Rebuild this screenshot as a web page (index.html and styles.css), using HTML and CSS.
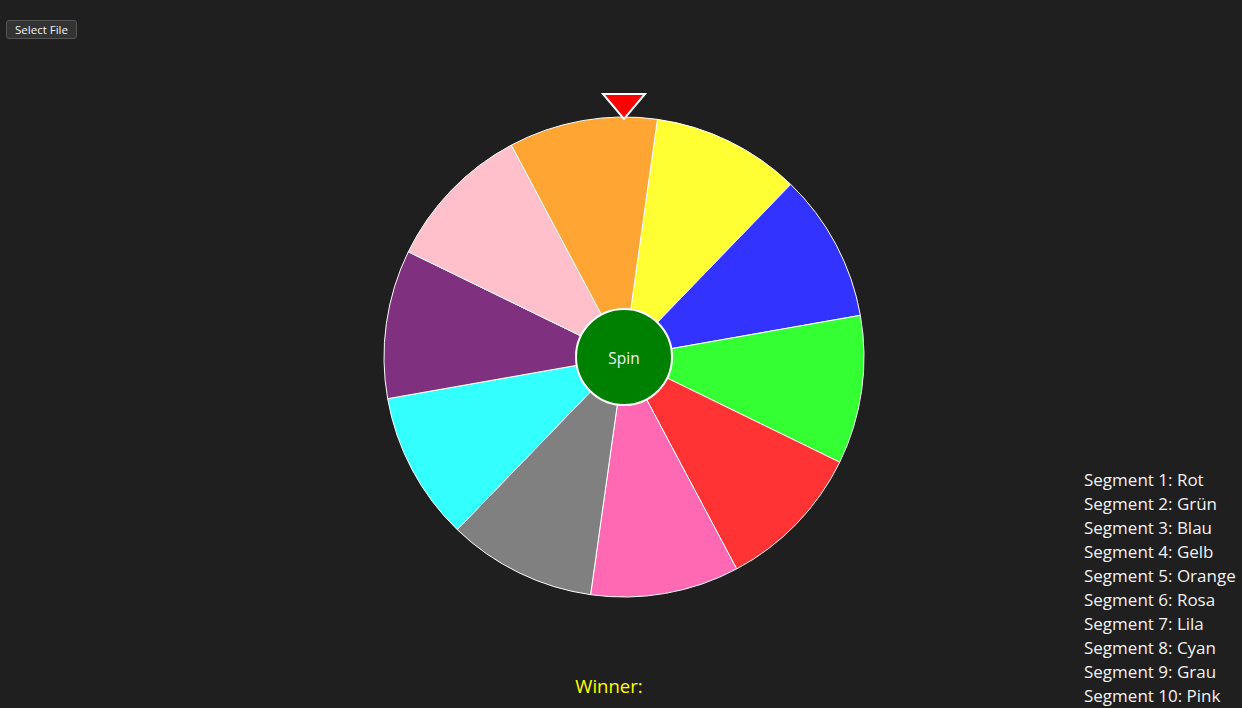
FILE: index.html
```html
<!DOCTYPE html>
<html lang="de">
<head>
<meta charset="utf-8">
<title>Glücksrad</title>
<link rel="stylesheet" href="styles.css">
</head>
<body>
<div class="toolbar">
  <button class="file-btn" type="button">Select File</button>
</div>
<main class="stage">
  <div class="wheel-col">
    <svg class="wheel" width="520" height="520" viewBox="-263 -270 520 520" xmlns="http://www.w3.org/2000/svg">
      <g class="segments" stroke="#ffffff" stroke-width="1">
        <path fill="#ffff33" d="M0 0 L33.40 -237.67 A240 240 0 0 1 166.72 -172.64 Z"/>
        <path fill="#3333ff" d="M0 0 L166.72 -172.64 A240 240 0 0 1 236.35 -41.68 Z"/>
        <path fill="#33ff33" d="M0 0 L236.35 -41.68 A240 240 0 0 1 215.71 105.21 Z"/>
        <path fill="#ff3333" d="M0 0 L215.71 105.21 A240 240 0 0 1 112.67 211.91 Z"/>
        <path fill="#ff69b4" d="M0 0 L112.67 211.91 A240 240 0 0 1 -33.40 237.67 Z"/>
        <path fill="#808080" d="M0 0 L-33.40 237.67 A240 240 0 0 1 -166.72 172.64 Z"/>
        <path fill="#33ffff" d="M0 0 L-166.72 172.64 A240 240 0 0 1 -236.35 41.68 Z"/>
        <path fill="#7f317f" d="M0 0 L-236.35 41.68 A240 240 0 0 1 -215.71 -105.21 Z"/>
        <path fill="#ffc0cb" d="M0 0 L-215.71 -105.21 A240 240 0 0 1 -112.67 -211.91 Z"/>
        <path fill="#ffa533" d="M0 0 L-112.67 -211.91 A240 240 0 0 1 33.40 -237.67 Z"/>
      </g>
      <circle class="hub" cx="0" cy="0" r="48" fill="#008000" stroke="#ffffff" stroke-width="2"/>
      <text class="spin-label" x="0" y="6.5" text-anchor="middle">Spin</text>
      <polygon class="pointer" points="-21,-263 21,-263 0,-238" fill="#ff0000" stroke="#ffffff" stroke-width="2" stroke-linejoin="miter"/>
    </svg>
    <p class="winner">Winner:</p>
  </div>
  <ul class="segment-list">
    <li>Segment 1: Rot</li>
    <li>Segment 2: Grün</li>
    <li>Segment 3: Blau</li>
    <li>Segment 4: Gelb</li>
    <li>Segment 5: Orange</li>
    <li>Segment 6: Rosa</li>
    <li>Segment 7: Lila</li>
    <li>Segment 8: Cyan</li>
    <li>Segment 9: Grau</li>
    <li>Segment 10: Pink</li>
  </ul>
</main>
</body>
</html>
```

FILE: styles.css
```css
html, body {
  margin: 0;
  padding: 0;
  background: #1f1f1f;
  color: #f2f2f2;
  font-family: "Open Sans", "Noto Sans", "Liberation Sans", sans-serif;
  overflow: hidden;
}

.toolbar {
  padding: 20px 0 0 6px;
  height: 19px;
}

.file-btn {
  display: block;
  box-sizing: border-box;
  width: 71px;
  height: 19px;
  padding: 0;
  background: #333333;
  color: #f2f2f2;
  border: 1px solid #555555;
  border-radius: 3px;
  font-family: inherit;
  font-size: 11.5px;
  line-height: 16px;
}

.stage {
  display: grid;
  grid-template-columns: 1fr 520px 1fr;
  margin-top: 48px;
}

.wheel-col {
  grid-column: 2;
  display: flex;
  flex-direction: column;
  align-items: center;
}

.wheel {
  display: block;
}

.spin-label {
  fill: #f2f2f2;
  font-family: "Open Sans", "Noto Sans", sans-serif;
  font-size: 15.5px;
}

.winner {
  margin: 67px 0 10px -24px;
  color: #ffff00;
  font-size: 18.5px;
  line-height: 24px;
}

.segment-list {
  grid-column: 3;
  align-self: end;
  list-style: none;
  margin: 0;
  padding: 0 0 0 203px;
  font-size: 17px;
  line-height: 24px;
  white-space: nowrap;
}
```
